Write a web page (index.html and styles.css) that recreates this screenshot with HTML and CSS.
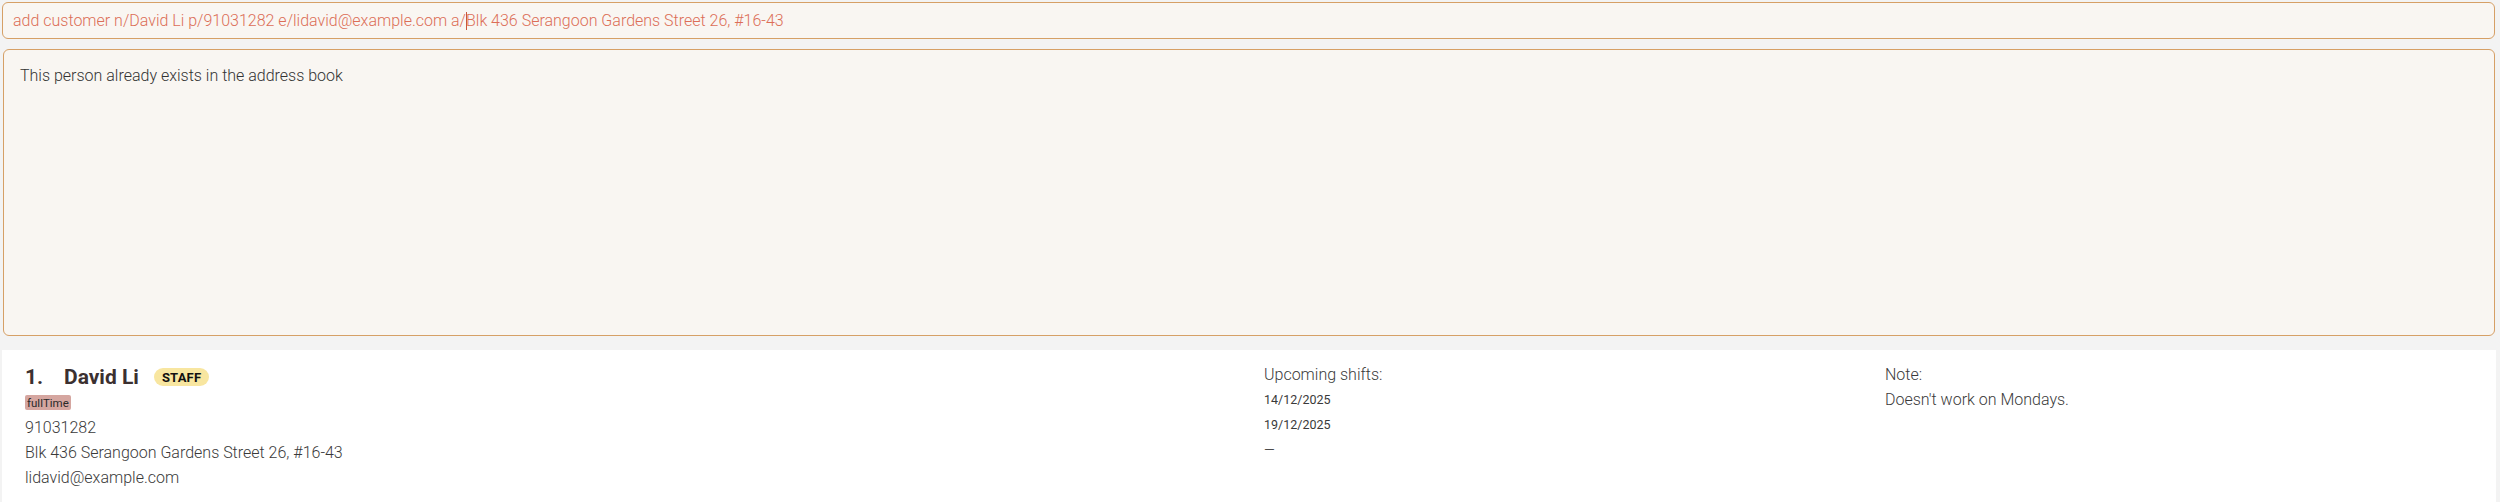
FILE: index.html
```html
<!DOCTYPE html>
<html lang="en">
<head>
<meta charset="utf-8">
<title>Address Book</title>
<link rel="stylesheet" href="styles.css">
</head>
<body>
<div class="app">
  <div class="command-box">
    <span class="command-text">add customer n/David Li p/91031282 e/lidavid@example.com a/<span class="caret"></span>Blk 436 Serangoon Gardens Street 26, #16-43</span>
  </div>
  <div class="result-box">
    <div class="result-text">This person already exists in the address book</div>
  </div>
  <div class="card">
    <div class="col-main">
      <div class="name-row">
        <span class="index">1.</span>
        <span class="name">David Li</span>
        <span class="role-badge">STAFF</span>
      </div>
      <div class="tags"><span class="tag">fullTime</span></div>
      <div class="line">91031282</div>
      <div class="line">Blk 436 Serangoon Gardens Street 26, #16-43</div>
      <div class="line">lidavid@example.com</div>
    </div>
    <div class="col-shifts">
      <div class="col-head">Upcoming shifts:</div>
      <div class="shift">14/12/2025</div>
      <div class="shift">19/12/2025</div>
      <div class="shift dash">—</div>
    </div>
    <div class="col-note">
      <div class="col-head">Note:</div>
      <div class="note">Doesn't work on Mondays.</div>
    </div>
  </div>
</div>
</body>
</html>
```

FILE: styles.css
```css
html, body {
  margin: 0;
  padding: 0;
  background: #f3f3f3;
  font-family: Roboto, "Liberation Sans", sans-serif;
}

.app {
  display: flex;
  flex-direction: column;
  padding: 2px 5px 0 2px;
  height: 502px;
  box-sizing: border-box;
}

.command-box {
  height: 37px;
  box-sizing: border-box;
  border: 1px solid #d6a066;
  border-radius: 6px;
  background: #f9f6f2;
  display: flex;
  align-items: center;
  padding-left: 10px;
}

.command-text {
  font-size: 16px;
  font-weight: 300;
  color: #dc6e57;
  white-space: pre;
}

.caret {
  display: inline-block;
  width: 1px;
  height: 18px;
  margin-right: -1px;
  background: #c8553e;
  vertical-align: -4px;
}

.result-box {
  margin-top: 10px;
  margin-left: 1px;
  height: 287px;
  box-sizing: border-box;
  border: 1px solid #d6a066;
  border-radius: 6px;
  background: #f9f6f2;
  padding: 16px 16px;
}

.result-text {
  font-size: 16px;
  font-weight: 300;
  color: #333333;
  line-height: 20px;
}

.card {
  margin-top: 14px;
  margin-right: -1px;
  flex: 1;
  background: #ffffff;
  display: grid;
  grid-template-columns: 1239px 621px 1fr;
  padding: 15px 0 0 23px;
  color: #3a3a3a;
}

.name-row {
  display: flex;
  align-items: center;
  height: 24px;
}

.index, .name {
  font-size: 21px;
  font-weight: 700;
  color: #3b3030;
}

.index {
  width: 39px;
}

.name {
  margin-right: 15px;
}

.role-badge {
  display: inline-flex;
  align-items: center;
  height: 18px;
  padding: 0 8px;
  border-radius: 9px;
  background: #f8e6a0;
  color: #111111;
  font-size: 13px;
  font-weight: 700;
  letter-spacing: 0.2px;
}

.tags {
  margin-top: 6px;
  display: flex;
}

.tag {
  display: inline-flex;
  align-items: center;
  height: 15px;
  padding: 0 2px;
  border-radius: 2px;
  background: #d5a6a0;
  color: #2a2a2a;
  font-size: 11.5px;
  font-weight: 400;
}

.line {
  font-size: 16px;
  font-weight: 300;
  line-height: 25px;
}

.tags + .line {
  margin-top: 5px;
}

.col-shifts, .col-note {
  margin-top: -2px;
}

.col-head {
  font-size: 16px;
  font-weight: 300;
  line-height: 24px;
}

.shift {
  font-size: 12.5px;
  font-weight: 400;
  line-height: 25px;
  color: #3a3a3a;
}

.dash {
  font-size: 14px;
  font-weight: 300;
  line-height: 26px;
  color: #222222;
}

.note {
  font-size: 16px;
  font-weight: 300;
  line-height: 25px;
}
```
